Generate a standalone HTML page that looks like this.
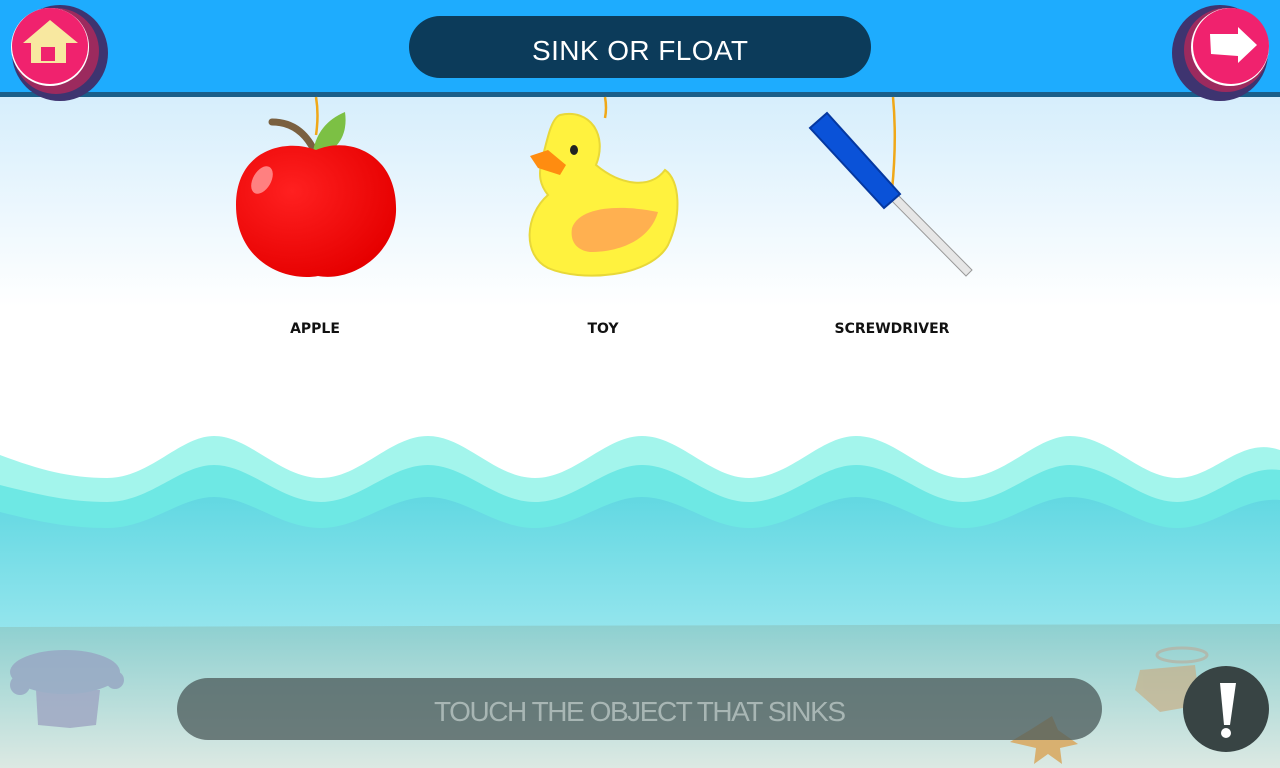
<!DOCTYPE html>
<html><head><meta charset="utf-8"><style>
html,body{margin:0;padding:0;width:1280px;height:768px;overflow:hidden;font-family:"Liberation Sans",sans-serif}
</style></head><body>
<svg width="1280" height="768" viewBox="0 0 1280 768" xmlns="http://www.w3.org/2000/svg" style="display:block">
<defs>
<linearGradient id="sky" x1="0" y1="0" x2="0" y2="1"><stop offset="0" stop-color="#d6eefc"/><stop offset="1" stop-color="#ffffff"/></linearGradient>
<linearGradient id="sea" x1="0" y1="0" x2="0" y2="1"><stop offset="0" stop-color="#62d8e2"/><stop offset="1" stop-color="#98e6ee"/></linearGradient>
<linearGradient id="sand" x1="0" y1="0" x2="0" y2="1"><stop offset="0" stop-color="#8dd0d0"/><stop offset="1" stop-color="#dce9e3"/></linearGradient>
<radialGradient id="ap" cx="0.35" cy="0.35" r="0.7"><stop offset="0" stop-color="#ff2020"/><stop offset="1" stop-color="#e60000"/></radialGradient>
</defs>
<rect width="1280" height="768" fill="#fff"/>
<rect y="97" width="1280" height="210" fill="url(#sky)"/>
<path d="M0 455 C40 470 70 478 107 478 C150 478 180 436 214 436 C250 436 280 478 321 478 C360 478 390 436 428 436 C465 436 495 478 535 478 C575 478 605 436 642 436 C680 436 710 478 749 478 C790 478 820 436 856 436 C895 436 925 478 963 478 C1005 478 1035 436 1070 436 C1110 436 1140 478 1177 478 C1215 478 1240 436 1280 450 L1280 640 L0 640Z" fill="#a3f5ec"/>
<path d="M0 485 C40 495 70 502 107 502 C150 502 180 465 214 465 C250 465 280 502 321 502 C360 502 390 465 428 465 C465 465 495 502 535 502 C575 502 605 465 642 465 C680 465 710 502 749 502 C790 502 820 465 856 465 C895 465 925 502 963 502 C1005 502 1035 465 1070 465 C1110 465 1140 502 1177 502 C1215 502 1240 465 1280 470 L1280 640 L0 640Z" fill="#6ee8e4"/>
<path d="M0 512 C40 522 70 528 107 528 C150 528 180 497 214 497 C250 497 280 528 321 528 C360 528 390 497 428 497 C465 497 495 528 535 528 C575 528 605 497 642 497 C680 497 710 528 749 528 C790 528 820 497 856 497 C895 497 925 528 963 528 C1005 528 1035 497 1070 497 C1110 497 1140 528 1177 528 C1215 528 1240 497 1280 500 L1280 640 L0 640Z" fill="url(#sea)"/>
<path d="M0 627 L1280 624 L1280 768 L0 768Z" fill="url(#sand)"/>
<g fill="#98a8c4" opacity="0.85">
<path d="M36 690 L100 690 L96 725 L70 728 L38 725Z" fill="#a0a8c4"/>
<ellipse cx="65" cy="672" rx="55" ry="22"/>
<circle cx="20" cy="685" r="10"/><circle cx="115" cy="680" r="9"/>
</g>
<g opacity="0.7" fill="#c8b088">
<path d="M1140 670 L1195 665 L1200 705 L1160 712 L1135 690Z"/>
<ellipse cx="1182" cy="655" rx="25" ry="7" fill="none" stroke="#b8b0a0" stroke-width="3"/>
</g>
<path d="M1030 730 L1052 716 L1058 730 L1078 744 L1060 748 L1062 764 L1048 754 L1034 764 L1036 748 L1010 742 Z" fill="#d8b070"/>
<rect width="1280" height="92" fill="#1eacfe"/>
<rect y="92" width="1280" height="5" fill="#1a5f8a"/>
<rect x="409" y="16" width="462" height="62" rx="31" fill="#0c3b5a"/>
<text x="640" y="60" text-anchor="middle" font-size="28" fill="#fff" font-family="Liberation Sans, sans-serif" textLength="216">SINK OR FLOAT</text>
<circle cx="60" cy="53" r="48" fill="#3e3470"/>
<circle cx="56" cy="51" r="43" fill="#9c2a5e"/>
<circle cx="50" cy="47" r="39" fill="#fff"/>
<circle cx="50" cy="46" r="38" fill="#f0226e"/>
<path d="M50 20 L78 43 L66 43 L66 63 L31 63 L31 43 L23 43 Z" fill="#f8e8a0"/>
<rect x="41" y="47" width="14" height="14" fill="#f0226e"/>
<circle cx="1220" cy="53" r="48" fill="#3e3470"/>
<circle cx="1226" cy="50" r="42" fill="#9c2a5e"/>
<circle cx="1230" cy="47" r="39" fill="#fff"/>
<circle cx="1231" cy="46" r="38" fill="#f0226e"/>
<path d="M1210 34 L1238 34 L1238 27 L1257 45 L1238 63 L1238 56 L1211 54 Z" fill="#fff"/>
<path d="M316 97 Q319 115 316 135" stroke="#f0a818" stroke-width="2.5" fill="none"/>
<path d="M605 97 Q607 108 605 118" stroke="#f0a818" stroke-width="2.5" fill="none"/>
<path d="M893 97 Q897 140 892 190" stroke="#f0a818" stroke-width="2.5" fill="none"/>
<path d="M314 150 Q300 122 272 122" stroke="#7a6040" stroke-width="7" fill="none" stroke-linecap="round"/>
<path d="M312 160 Q314 125 345 112 Q350 148 312 160Z" fill="#7cc044"/>
<path d="M316 150 C350 135 398 155 396 212 C394 255 352 282 318 276 C286 282 236 262 236 205 C236 150 285 138 316 150Z" fill="url(#ap)"/>
<ellipse cx="262" cy="180" rx="9" ry="15" fill="#ff8080" transform="rotate(30 262 180)"/>
<path d="M560 115 C590 108 608 135 596 165 C620 185 650 190 665 170 C680 180 682 215 668 245 C650 278 580 282 548 268 C522 255 525 215 548 195 C540 185 538 175 542 160 C548 135 552 118 560 115Z" fill="#fff23e" stroke="#e8d838" stroke-width="2"/>
<path d="M548 150 L530 156 L538 168 L560 175 L566 165Z" fill="#ff8c10"/>
<ellipse cx="574" cy="150" rx="4" ry="5" fill="#222"/>
<path d="M572 228 C580 205 625 205 658 212 C650 240 620 252 590 252 C575 250 570 240 572 228Z" fill="#ffb050"/>
<path d="M887 196 L893 190 L972 270 L966 276Z" fill="#e6e6e6" stroke="#999" stroke-width="1"/>
<path d="M827 113 L810 128 L884 208 L900 194Z" fill="#0a52d8" stroke="#0538a0" stroke-width="2"/>
<g font-family="DejaVu Sans, sans-serif" font-weight="bold" font-size="14" fill="#111" text-anchor="middle">
<text x="315" y="333">APPLE</text><text x="603" y="333">TOY</text><text x="892" y="333">SCREWDRIVER</text>
</g>
<rect x="177" y="678" width="925" height="62" rx="31" fill="#4e5e5e" opacity="0.78"/>
<text x="640" y="721" text-anchor="middle" font-size="28" fill="#a8b6b4" textLength="412">TOUCH THE OBJECT THAT SINKS</text>
<circle cx="1226" cy="709" r="43" fill="#384444"/>
<path d="M1220 683 L1236 683 L1230 725 L1224 725Z" fill="#fff"/>
<circle cx="1226" cy="733" r="5" fill="#fff"/>
</svg>
</body></html>
